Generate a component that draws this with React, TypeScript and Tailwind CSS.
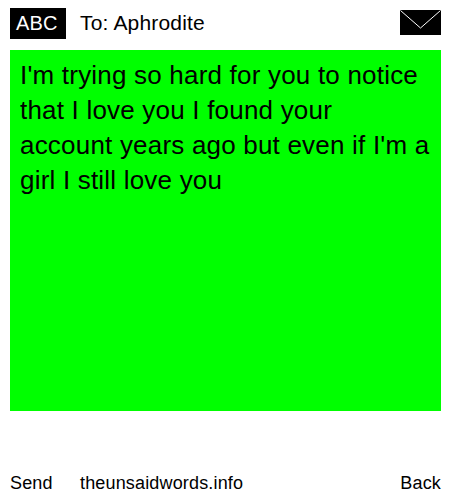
export default function App() {
  return (
    <div className="flex h-[500px] w-[450px] flex-col bg-white pl-[10px] pr-[9px] pt-[8px] font-['Liberation_Sans',Arial,sans-serif] text-black">
      <div className="flex h-[31px] items-center">
        <div className="flex h-[31px] w-[56px] items-center bg-black pb-[2px] pl-[6px] text-[20px] tracking-[0.2px] text-white">ABC</div>
        <div className="ml-[14px] pb-[2px] text-[21px] tracking-[0.18px]">To: Aphrodite</div>
        <svg className="ml-auto mb-[2px]" width="41" height="25" viewBox="0 0 41 25">
          <rect width="41" height="25" fill="#000" />
          <path d="M0.5 0.5 L20.5 18 L40.5 0.5" fill="none" stroke="#fff" strokeWidth="1" />
        </svg>
      </div>
      <div className="mt-[11px] h-[361px] bg-[#00ff00] px-[10px] py-[8px] text-[26px] leading-[35px] tracking-[0.2px]">
        I'm trying so hard for you to notice that I love you I found your account years ago but even if I'm a girl I still love you
      </div>
      <div className="mt-[62px] flex text-[18px] leading-[21px] tracking-[0.16px]">
        <span className="w-[70px]">Send</span>
        <span>theunsaidwords.info</span>
        <span className="ml-auto">Back</span>
      </div>
    </div>
  );
}
